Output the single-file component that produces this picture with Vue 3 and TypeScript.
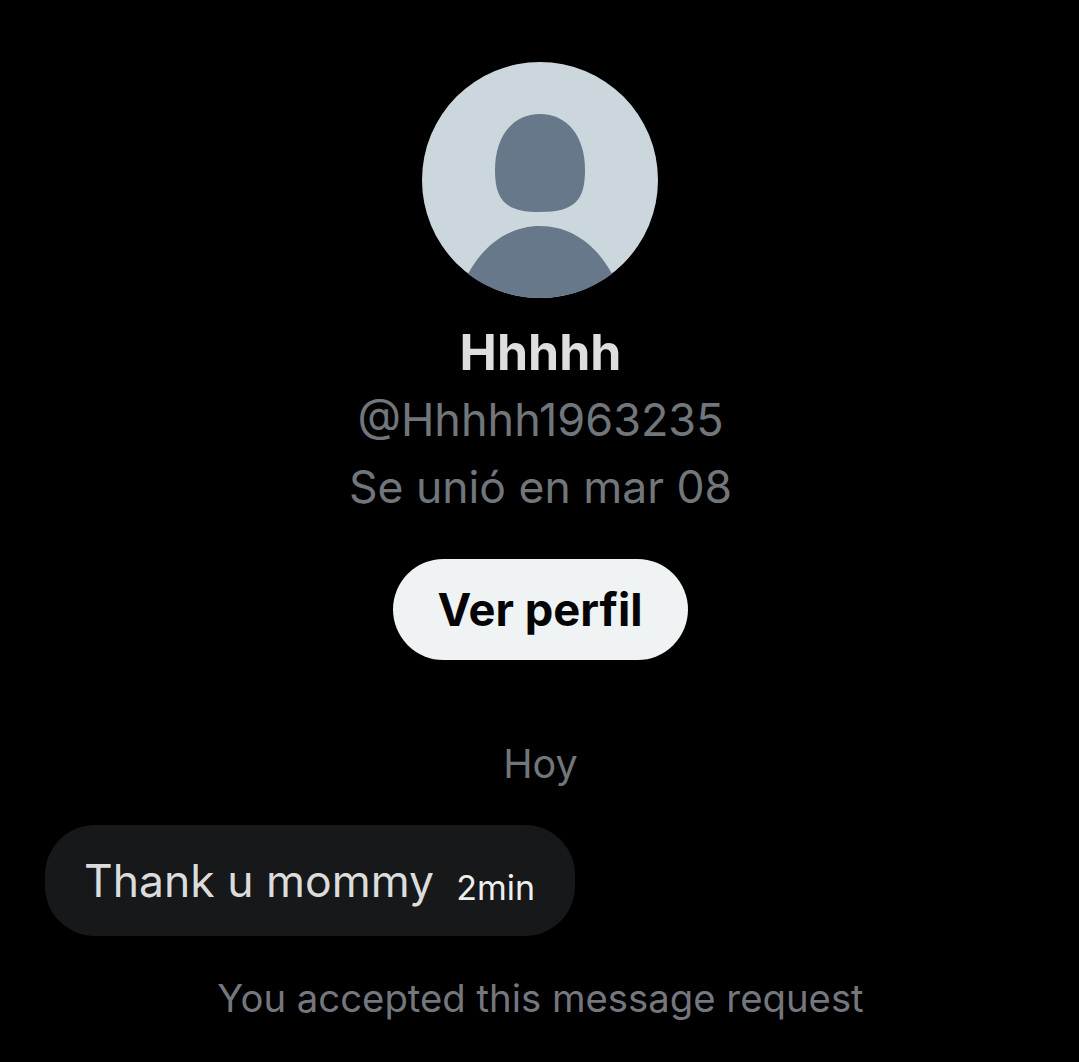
<script setup lang="ts">
const name = 'Hhhhh'
</script>
<template>
  <main class="page">
    <div class="avatar">
      <svg viewBox="0 0 236 236" width="236" height="236">
        <circle cx="118" cy="118" r="118" fill="#ccd6dd" />
        <path d="M118 52c27 0 45 22 45 56 0 30-10 42-45 42s-45-12-45-42c0-34 18-56 45-56z" fill="#66788a" />
        <path d="M46 212c16-30 42-48 72-48s56 18 72 48c-20 15-45 24-72 24s-52-9-72-24z" fill="#66788a" />
      </svg>
    </div>
    <h1 class="name">{{ name }}</h1>
    <div class="handle">@Hhhhh1963235</div>
    <div class="joined">Se unió en mar 08</div>
    <button class="btn">Ver perfil</button>
    <div class="day">Hoy</div>
    <div class="row">
      <div class="bubble"><span class="msg">Thank u mommy</span><span class="time">2min</span></div>
    </div>
    <div class="note">You accepted this message request</div>
  </main>
</template>
<style scoped>
.page { width: 1079px; height: 1062px; background: #000; display: flex; flex-direction: column; align-items: center; font-family: Inter, Roboto, "Liberation Sans", sans-serif; overflow: hidden; padding-top: 62px; box-sizing: border-box; }
.avatar { width: 236px; height: 236px; }
.avatar svg { display: block; }
.name { margin: 24px 0 0 2px; font-size: 50px; line-height: 60px; font-weight: 700; color: #dedede; }
.handle { margin: 8px 0 0 2px; font-size: 45px; line-height: 60px; color: #71767b; }
.joined { margin: 7px 0 0 2px; font-size: 44.5px; line-height: 60px; color: #71767b; }
.btn { margin: 42px 0 0 1px; width: 295px; height: 101px; border: 0; border-radius: 51px; background: #eff3f4; color: #050505; font: 700 45.3px Inter, Roboto, "Liberation Sans", sans-serif; }
.day { margin: 79px 0 0 2px; font-size: 39.5px; line-height: 50px; color: #71767b; }
.row { width: 100%; margin-top: 36px; padding-left: 45px; box-sizing: border-box; }
.bubble { width: 530px; height: 111px; box-sizing: border-box; border-radius: 50px; background: #16181a; display: flex; align-items: center; padding: 0 40px 0 39px; justify-content: space-between; }
.msg { font-size: 44.5px; color: #dcdcdc; }
.time { font-size: 34px; color: #eeeeee; margin-top: 14px; }
.note { margin: 37px 0 0 2px; font-size: 38.3px; line-height: 50px; color: #74777d; }
</style>
